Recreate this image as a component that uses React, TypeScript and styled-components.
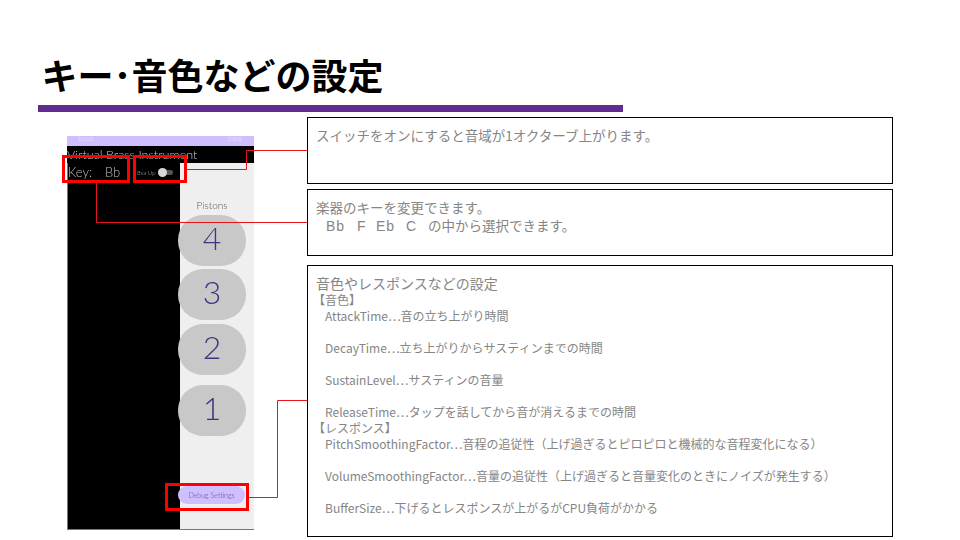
import React from "react";
import styled, { createGlobalStyle } from "styled-components";

const GlobalStyle = createGlobalStyle`
  html, body {
    margin: 0;
    padding: 0;
    background: #fff;
  }
`;

const pistons = [
  { label: "4", gap: 3 },
  { label: "3", gap: 4 },
  { label: "2", gap: 10 },
  { label: "1", gap: 0 },
];

const keyNames = [
  { label: "Bb", width: 31 },
  { label: "F", width: 19 },
  { label: "Eb", width: 30 },
  { label: "C", width: 22 },
];

const toneLines = [
  "AttackTime…音の立ち上がり時間",
  "DecayTime…立ち上がりからサスティンまでの時間",
  "SustainLevel…サスティンの音量",
  "ReleaseTime…タップを話してから音が消えるまでの時間",
];

const responseLines = [
  "PitchSmoothingFactor…音程の追従性（上げ過ぎるとピロピロと機械的な音程変化になる）",
  "VolumeSmoothingFactor…音量の追従性（上げ過ぎると音量変化のときにノイズが発生する）",
  "BufferSize…下げるとレスポンスが上がるがCPU負荷がかかる",
];

const App: React.FC = () => {
  return (
    <Slide>
      <GlobalStyle />
      <Title>キー･音色などの設定</Title>
      <Rule />
      <Content>
        <Phone>
          <StatusBar>
            <span>10:03</span>
            <span>100%</span>
          </StatusBar>
          <AppTitle>Virtual Brass Instrument</AppTitle>
          <PhoneBody>
            <BlackSide>
              <KeyLabel>Key:</KeyLabel>
              <KeyValue>Bb</KeyValue>
              <SwitchLabel>8va Up</SwitchLabel>
              <Switch />
            </BlackSide>
            <PistonPanel>
              <PistonsLabel>Pistons</PistonsLabel>
              {pistons.map((p) => (
                <Piston key={p.label} $gap={p.gap}>{p.label}</Piston>
              ))}
              <DebugButton>Debug Settings</DebugButton>
            </PistonPanel>
          </PhoneBody>
        </Phone>
        <Notes>
          <NoteBox>
            <NoteLine>スイッチをオンにすると音域が1オクターブ上がります。</NoteLine>
          </NoteBox>
          <NoteBox>
            <NoteLine>楽器のキーを変更できます。</NoteLine>
            <NoteLine>
              <KeyList>
                {keyNames.map((k) => (
                  <KeyName key={k.label} $width={k.width}>{k.label}</KeyName>
                ))}
              </KeyList>
              の中から選択できます。
            </NoteLine>
          </NoteBox>
          <DetailBox>
            <DetailHead>音色やレスポンスなどの設定</DetailHead>
            <SectionHead>【音色】</SectionHead>
            {toneLines.map((l, i) => (
              <DetailLine key={l} $last={i === toneLines.length - 1}>{l}</DetailLine>
            ))}
            <SectionHead>【レスポンス】</SectionHead>
            {responseLines.map((l) => (
              <DetailLine key={l}>{l}</DetailLine>
            ))}
          </DetailBox>
        </Notes>
      </Content>
      <Highlight $left={62} $top={155} $width={68} $height={28} />
      <Highlight $left={133} $top={155} $width={54} $height={28} />
      <Highlight $left={165} $top={483} $width={84} $height={28} />
      <Leaders viewBox="0 0 960 540">
        <path d="M187 169.5H246.5V150.5H307" />
        <path d="M96.5 183V222.5H307" />
        <path d="M249 497.5H277.5V400.5H307" />
      </Leaders>
    </Slide>
  );
};

export default App;

const Slide = styled.div`
  position: relative;
  width: 960px;
  height: 540px;
  overflow: hidden;
  background: #fff;
  font-family: "Noto Sans CJK JP", "Noto Sans", sans-serif;
`;

const Title = styled.h1`
  margin: 0;
  padding: 51px 0 0 41.5px;
  height: 54px;
  font-size: 36px;
  line-height: 46px;
  font-weight: 700;
  color: #000;
`;

const Rule = styled.div`
  width: 585px;
  height: 7px;
  margin-left: 38px;
  background: #5f2c91;
`;

const Content = styled.div`
  display: flex;
  align-items: flex-start;
  padding-top: 5px;
`;

const Phone = styled.div`
  width: 187px;
  height: 394px;
  margin: 19px 0 0 67px;
  display: flex;
  flex-direction: column;
  filter: blur(0.4px);
  font-family: "Lato", "Noto Sans", sans-serif;
  font-weight: 300;
`;

const StatusBar = styled.div`
  height: 10px;
  flex: none;
  display: flex;
  justify-content: space-between;
  padding: 0 12px 0 11px;
  background: #cfbfff;
  color: #f1ecff;
  font-size: 6px;
  line-height: 5px;
  overflow: hidden;
`;

const AppTitle = styled.div`
  height: 17px;
  flex: none;
  background: #000;
  color: #c8c8c8;
  font-size: 12.6px;
  line-height: 17px;
  white-space: nowrap;
`;

const PhoneBody = styled.div`
  flex: 1;
  display: flex;
  border-bottom: 1px solid #777;
`;

const BlackSide = styled.div`
  width: 113px;
  display: flex;
  align-items: flex-start;
  background: #000;
  border-left: 1px solid #777;
  box-sizing: border-box;
  color: #bdbdbd;
  padding-top: 1px;
`;

const KeyLabel = styled.span`
  width: 37px;
  font-size: 13px;
  line-height: 16px;
`;

const KeyValue = styled.span`
  width: 30px;
  font-size: 13px;
  line-height: 16px;
`;

const SwitchLabel = styled.span`
  margin-left: 2px;
  font-size: 6px;
  line-height: 17px;
  white-space: nowrap;
`;

const Switch = styled.span`
  position: relative;
  width: 15px;
  height: 5px;
  margin: 6px 0 0 2px;
  border-radius: 3px;
  background: #555;

  &::after {
    content: "";
    position: absolute;
    left: 0;
    top: -2px;
    width: 9px;
    height: 9px;
    border-radius: 50%;
    background: #d8d8d8;
  }
`;

const PistonPanel = styled.div`
  flex: 1;
  display: flex;
  flex-direction: column;
  align-items: flex-start;
  background: #efefef;
`;

const PistonsLabel = styled.div`
  width: 64px;
  padding-top: 34px;
  height: 18px;
  text-align: center;
  font-size: 10px;
  line-height: 16px;
  color: #555;
`;

const Piston = styled.div<{ $gap: number }>`
  width: 68px;
  height: 51px;
  flex: none;
  margin: 0 0 ${(p) => p.$gap}px -2px;
  border-radius: 25px;
  background: #c8c8c8;
  color: #43337f;
  font-size: 32px;
  line-height: 45px;
  text-align: center;
`;

const DebugButton = styled.div`
  width: 67px;
  height: 18px;
  margin: 50px 0 0 -2px;
  border-radius: 9px;
  background: #cfbfff;
  color: #5c4a99;
  font-size: 7px;
  line-height: 18px;
  text-align: center;
  white-space: nowrap;
`;

const Notes = styled.div`
  width: 586px;
  margin-left: 53px;
  display: flex;
  flex-direction: column;
  color: #858585;
`;

const NoteBox = styled.div`
  box-sizing: border-box;
  height: 67px;
  margin-bottom: 5px;
  padding: 8px 8px 0;
  border: 1px solid #000;
`;

const NoteLine = styled.div`
  font-size: 13.5px;
  line-height: 18px;
  white-space: nowrap;
`;

const KeyList = styled.span`
  display: inline-flex;
  padding-left: 10px;
`;

const KeyName = styled.span<{ $width: number }>`
  width: ${(p) => p.$width}px;
  font-family: "Liberation Sans", sans-serif;
  font-size: 14px;
  letter-spacing: 1px;
`;

const DetailBox = styled.div`
  box-sizing: border-box;
  height: 272px;
  margin-top: 4px;
  padding: 8px 8px 0;
  border: 1px solid #000;
`;

const DetailHead = styled.div`
  font-size: 14px;
  line-height: 18px;
`;

const SectionHead = styled.div`
  margin-left: -3px;
  font-size: 12px;
  line-height: 16px;
`;

const DetailLine = styled.div<{ $last?: boolean }>`
  padding-left: 9px;
  font-size: 12px;
  line-height: 16px;
  height: ${(p) => (p.$last ? 16 : 32)}px;
  white-space: nowrap;
`;

const Highlight = styled.div<{ $left: number; $top: number; $width: number; $height: number }>`
  position: absolute;
  left: ${(p) => p.$left}px;
  top: ${(p) => p.$top}px;
  width: ${(p) => p.$width}px;
  height: ${(p) => p.$height}px;
  box-sizing: border-box;
  border: 3px solid #ff0000;
`;

const Leaders = styled.svg`
  position: absolute;
  left: 0;
  top: 0;
  width: 960px;
  height: 540px;
  pointer-events: none;

  path {
    fill: none;
    stroke: #e8141c;
    stroke-width: 1;
  }
`;
